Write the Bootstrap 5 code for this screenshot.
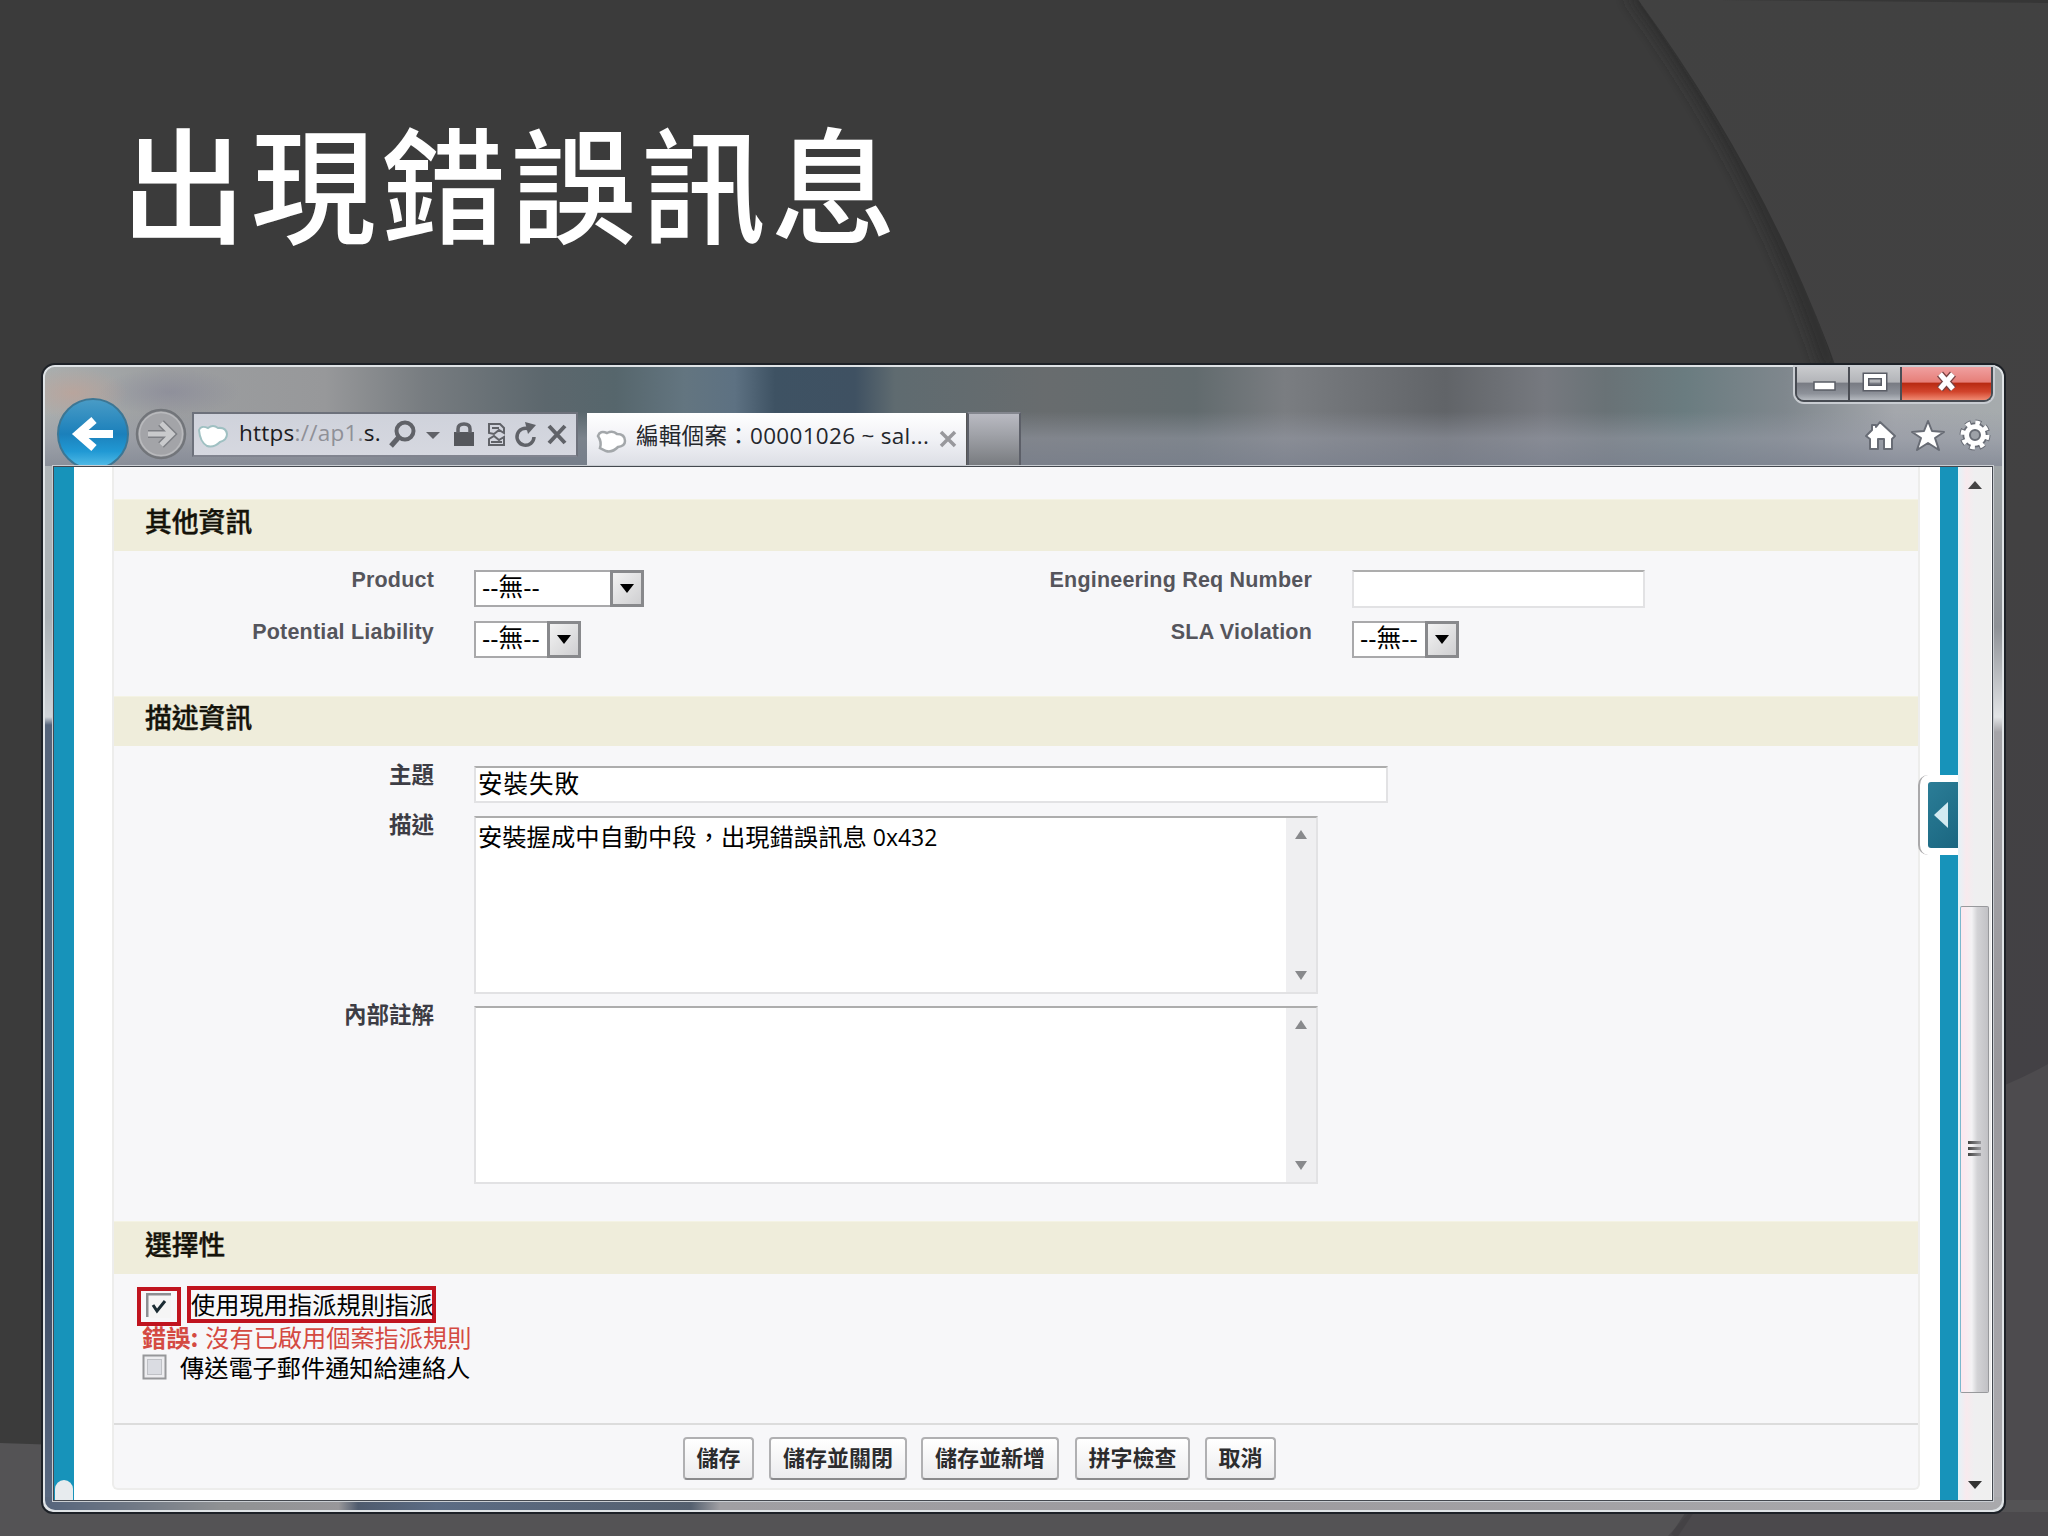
<!DOCTYPE html>
<html lang="zh-Hant">
<head>
<meta charset="utf-8">
<meta name="viewport" content="width=device-width, initial-scale=1">
<title>出現錯誤訊息</title>
<link rel="stylesheet" href="https://cdn.jsdelivr.net/npm/bootstrap@5.3.0/dist/css/bootstrap.min.css">
<script src="https://cdn.jsdelivr.net/npm/bootstrap@5.3.0/dist/js/bootstrap.bundle.min.js"></script>
<style>
  body{width:2048px;height:1536px;overflow:hidden;background:#3b3b3b;font-family:"Liberation Sans","Noto Sans CJK TC",sans-serif;color:#000;line-height:1}
  svg{display:block;flex:none}
  .backdrop{z-index:0}
  .slide{z-index:1;width:2048px;height:1536px}
  .slide-title{height:363px;padding:115px 0 0 121px;font:500 125px/130px "Noto Sans CJK TC",sans-serif;color:#fff;letter-spacing:5px;white-space:nowrap}
  /* browser window */
  .win{margin-left:41px;width:1965px;height:1151px;border-radius:14px 14px 12px 12px;border:2px solid #1d2127;padding:2px;background:#dfe3e6}
  .glass{border-radius:10px;width:100%;height:100%;padding:0 11px 11px 8px;
    background:
     linear-gradient(90deg,#56657c 0,#6d7684 4%,#8f9193 9%,#98979a 15%,#4f5b6e 16%,#5c6c84 20%,#55606f 33%,#a09fa3 34.5%,#9d9b9f 60%,#a9a9ac 100%) 0 100%/100% 13px no-repeat,
     linear-gradient(180deg,#b3b9bb 0,#a9b0b5 250px,#cfd3d8 350px,#55647b 358px,#56657b 700px,#3e4d66 900px,#5a6a82 100%) 0 0/9px 100% no-repeat,
     linear-gradient(180deg,#a9b0b0 0,#8e9196 260px,#e2e4e6 350px,#a5a4a8 365px,#98979b 700px,#adacb0 100%) 100% 0/11px 100% no-repeat,
     #8b9199}
  .chrome{height:99px;margin:0 -11px 0 -8px;border-radius:10px 10px 0 0;padding:0 9px 0 12px;
    background:
     linear-gradient(180deg,transparent 45%,rgba(150,154,166,.55) 72%,rgba(128,134,148,.75) 100%),
     radial-gradient(ellipse 55px 26px at 28px 26px,rgba(200,160,145,.55),transparent),
     radial-gradient(ellipse 70px 24px at 125px 25px,rgba(130,130,150,.5),transparent),
     linear-gradient(90deg,#a9aeae 0,#9c9ea0 120px,#97989a 280px,#777c80 380px,#5c676d 500px,#56666c 570px,#637580 640px,#5d7182 690px,#3e5263 730px,#3f5162 810px,#5f6b70 850px,#686c6e 1000px,#626b6e 1150px,#7a7d81 1240px,#616468 1400px,#76797f 1500px,#697276 1560px,#6a7c80 1640px,#7f878d 1740px,#a4a7ac 1850px,#a6abad 100%)}
  .controls{top:0;right:9px;height:35px;border:2px solid #474b52;border-top:0;border-radius:0 0 9px 9px;overflow:hidden;box-shadow:0 0 0 2px #c8ccd1}
  .controls div{background:linear-gradient(#c9cacd 0,#b3b5b9 45%,#797c84 50%,#8d9199 80%,#b5b9bf);border-right:2px solid #4b4e55}
  .controls .close-win{background:linear-gradient(#f0a0a0 0,#e67f79 45%,#b92b13 50%,#d2442c 75%,#f08a72);border:0}
  .addr{height:45px;width:386px;background:linear-gradient(#cfd2db,#d6d8e0);border:2px solid #6d717b;border-bottom-color:#81848f;font-family:"Open Sans","Noto Sans",sans-serif;font-size:22.5px;color:#1c1c22;margin-left:2px;margin-bottom:9px}
  .addr .url{padding-bottom:3px;letter-spacing:.25px}
  .addr .dim{color:#8f9097}
  .tabx{height:53px;width:380px;margin-left:9px;background:linear-gradient(#fff,#f0f1f5 50%,#dcdee5);font-family:"Open Sans","Noto Sans CJK TC",sans-serif;font-size:22.5px;letter-spacing:.3px;color:#25272c;padding-left:9px;border-right:1px solid #555}
  .tabx .cap{padding-bottom:6px}
  .newtab{height:54px;width:54px;background:linear-gradient(#b9bac2,#a0a2a8 40%,#777a7e);border:2px solid #5c5f68;border-bottom:0;border-top-color:#83868e}
  .view{border:1px solid #44484f;height:1035px;width:1940px;background:#fff;outline:1px solid #c9cdd2}
  .teal{background:#1793ba}
  .page{width:1866px;padding:0 21px 0 38px}
  .panel{width:1808px;height:1023px;background:#f7f7f9;border:2px solid #ededec;border-top:0;border-radius:0 0 6px 6px}
  .sec{background:#efeddb;font-size:26.8px;font-weight:500;color:#15130a;padding:0 0 8px 31px;display:flex;align-items:center;-webkit-text-stroke:.4px #15130a;border-top:1px solid #f4f3e4;font-family:"Noto Sans CJK TC",sans-serif}
  .lbl{width:320px;text-align:right;font-weight:700;font-size:21.5px;color:#55555c;letter-spacing:.2px;white-space:nowrap}
  .lbl.zh{font-size:22.5px;letter-spacing:0;color:#3d3d45;margin-top:-4px;font-family:"Noto Sans CJK TC",sans-serif}
  .fld{background:#fff;border:2px solid #e2e2e4;border-top-color:#adadad;font:400 24.5px/1 "Noto Sans CJK TC",sans-serif}
  .pick{background:#fff;border:2px solid #a9a9ab;height:37px;font-size:24.8px;white-space:nowrap;display:flex;justify-content:space-between;align-items:center;padding-left:6px}
  .pick b{width:34px;height:37px;flex:none;margin:-2px;border:3px solid #88898c;background:linear-gradient(135deg,#f3f3f3,#cfcfd1);display:flex;align-items:center;justify-content:center}
  .mem{width:844px;height:178px;display:flex}
  .mem .txt{flex:1;padding:6px 0 0 2px;font-size:24.3px;white-space:nowrap}
  .mem .txt span{font:400 23px/1 "Open Sans",sans-serif}
  .mem .bar{width:30px;background:#efeff1;display:flex;flex-direction:column;justify-content:space-between;align-items:center;padding:12px 0}
  .zh-body{font:400 24.2px/1 "Noto Sans CJK TC",sans-serif;white-space:nowrap}
  .hot{border:4px solid #c0141f}
  .btnx{height:43px;border:2px solid #b0b0b2;border-bottom-color:#8a8a8c;border-radius:4px;background:linear-gradient(#fff,#ececee);font:700 22px/1 "Noto Sans CJK TC",sans-serif;color:#2c2c2e;display:flex;align-items:center;justify-content:center;padding:0 0 5px}
  .vscroll{width:33px;background:linear-gradient(90deg,#e3f3f8 0,#f8eaee 25%,#efeff0 50%,#efefef)}
  .thumb{width:29px;height:487px;border:1px solid #98999c;border-left-color:#7bb9ce;border-radius:2px;background:linear-gradient(90deg,#fbe9f0 10%,#f3f2f4 40%,#d3d3d6 60%,#c1c1c5)}
  .grip i{display:block;width:13px;height:3px;margin-bottom:3px;background:linear-gradient(90deg,#444,#9a9a9e)}
  .drawer{left:1864px;top:308px;width:40px;height:80px;background:#fff;border-left:2px solid #aaa9ab;border-radius:10px 0 0 10px;padding:7px 0 0 8px}
  .drawer div{height:66px;width:30px;background:linear-gradient(135deg,#2b7d97,#1a6680);border-radius:3px 0 0 3px;padding:20px 0 0 6px}
  .bubble{left:1px;bottom:0;width:18px;height:20px;background:#e7ebee;border-radius:9px 9px 0 0}
</style>
</head>
<body>
<svg class="backdrop position-absolute top-0 start-0" width="2048" height="1536" viewBox="0 0 2048 1536">
  <defs>
    <linearGradient id="g2" x1="0" y1="0" x2="0" y2="1"><stop offset="0" stop-color="#414141"/><stop offset=".35" stop-color="#424142"/><stop offset=".7" stop-color="#434145"/></linearGradient>
    <filter id="soft" x="-30%" y="-10%" width="160%" height="120%"><feGaussianBlur stdDeviation="8"/></filter>
  </defs>
  <rect width="2048" height="1536" fill="#3b3b3b"/>
  <path d="M1634 -10Q1768 175 1832 372" fill="none" stroke="#2a2a2a" stroke-width="14" filter="url(#soft)"/>
  <path d="M1631 -10Q1768 175 1840 378L1900 700L1900 1536H2048V-10Z" fill="url(#g2)"/>
  <path d="M1720 0L2048 3V0Z" fill="#363636"/>
  <path d="M2048 1064Q2020 1080 1980 1095V1536H2048Z" fill="#4d4b4e"/>
  <path d="M0 1443L60 1445V1500H2048V1536H0Z" fill="#545355"/>
  <path d="M1690 1512L1668 1536H2048V1512Z" fill="#4b494c"/>
  <path d="M1690 1512L1674 1536" stroke="#403f42" stroke-width="7" opacity=".6"/>
</svg>
<main class="slide position-relative d-flex flex-column">
  <h1 class="slide-title m-0">出現錯誤訊息</h1>
  <section class="win">
    <div class="glass">
      <header class="chrome d-flex align-items-end position-relative">
        <svg width="133" height="70" viewBox="0 0 133 70">
          <defs><linearGradient id="bk" x1="0" y1="0" x2="0" y2="1"><stop offset="0" stop-color="#4a9cc6"/><stop offset=".5" stop-color="#1b80bb"/><stop offset=".75" stop-color="#2199d4"/><stop offset="1" stop-color="#5cc2ea"/></linearGradient></defs>
          <circle cx="36" cy="38" r="35" fill="url(#bk)" stroke="#3c7694" stroke-width="2"/>
          <path d="M37 24L21 38L37 52M21 38H56" fill="none" stroke="#fff" stroke-width="8"/>
          <circle cx="104" cy="38" r="24" fill="#a3a4a8" stroke="#72757a" stroke-width="2.500"/>
          <circle cx="104" cy="38" r="21.500" fill="none" stroke="#b9babd" stroke-width="1.500"/>
          <path d="M91 38H113M104 27L115 38L104 49" fill="none" stroke="#7d7f84" stroke-width="8"/>
          <path d="M91 38H113M104 27L115 38L104 49" fill="none" stroke="#c9cacc" stroke-width="5"/>
        </svg>
        <div class="addr d-flex align-items-center">
          <svg width="45" height="40" viewBox="0 0 45 40"><path d="M5 15Q7 10 14 13Q19 9 24 13Q32 12 33 19Q33 25 26 27Q20 33 13 31Q6 27 5 15Z" fill="#fff" stroke="#9fc0c2" stroke-width="2"/></svg>
          <span class="url">https<span class="dim">://ap1.</span>s.</span>
          <svg width="190" height="40" viewBox="386 416 190 40" class="ms-auto" fill="none" stroke="#606268">
            <circle cx="405" cy="432" r="8.500" stroke-width="4"/><path d="M399 438L391 447" stroke-width="5"/>
            <path d="M426 433H440L433 440Z" fill="#606268" stroke="none"/>
            <rect x="454" y="433" width="20" height="14" fill="#55575c" stroke="none"/><path d="M458 434V430Q458 425 464 425Q470 425 470 430V434" stroke-width="3.500"/>
            <path d="M489 434V425H500L504 429V434L499 431L494 435ZM489 446V440L494 437L499 441L504 438V446Z" stroke-width="2"/><path d="M492 429H499M491 443H502" stroke-width="2"/>
            <path d="M534 438A8.500 8.500 0 1 1 529 430" stroke-width="3.500"/><path d="M525 423L536 426L528 435Z" fill="#606268" stroke="none"/>
            <path d="M549 427L565 444M565 427L549 444" stroke-width="4"/>
          </svg>
        </div>
        <div class="tabx d-flex align-items-center">
          <svg width="40" height="40" viewBox="0 0 40 40"><path d="M2 16Q4 10 11 13Q17 10 21 14Q29 14 29 21Q29 26 22 27Q16 33 10 31L4 28Q6 22 2 16Z" fill="#fff" stroke="#a3a7aa" stroke-width="2.500"/></svg>
          <span class="cap text-nowrap">編輯個案：00001026 ~ sal...</span>
          <svg width="20" height="20" viewBox="0 0 20 20" class="ms-auto" style="margin-right:8px"><path d="M3 2L17 16M17 2L3 16" stroke="#98989c" stroke-width="3.500"/></svg>
        </div>
        <div class="newtab"></div>
        <svg class="ms-auto" width="130" height="58" viewBox="1864 409 130 58" fill="#fff" stroke="#686c75" stroke-width="2" stroke-linejoin="round">
          <path d="M1867 437L1873 431V426H1877V428L1881 423L1896 437L1893 440V450H1885V440H1879V450H1871V440Z"/>
          <path d="M1929 422L1933 432L1945 433L1936 439L1940 451L1929 444L1918 451L1922 439L1913 433L1925 432Z"/>
          <g><circle cx="1976" cy="436" r="12.500" fill="none" stroke-width="6" stroke-dasharray="5.500 4.320"/><circle cx="1976" cy="436" r="8" fill="none" stroke="#686c75" stroke-width="9"/><circle cx="1976" cy="436" r="8" fill="none" stroke="#fff" stroke-width="5.500"/><circle cx="1976" cy="436" r="12" fill="none" stroke="#fff" stroke-width="5" stroke-dasharray="4.500 4.920"/><circle cx="1976" cy="436" r="5" fill="#9da1a8" stroke-width="2"/></g>
        </svg>
        <div class="controls position-absolute d-flex">
          <div style="width:53px"><svg width="51" height="35"><rect x="17" y="15" width="21" height="8" fill="#fff" stroke="#5a5d66" stroke-width="1.500"/></svg></div>
          <div style="width:52px"><svg width="50" height="35"><rect x="16" y="9" width="18" height="12" fill="none" stroke="#5a5d66" stroke-width="7"/><rect x="16" y="9" width="18" height="12" fill="none" stroke="#fff" stroke-width="4"/></svg></div>
          <div class="close-win" style="width:89px"><svg width="89" height="35" fill="none"><path d="M38 7L51 22M51 7L38 22" stroke="#7a4444" stroke-width="8"/><path d="M38 7L51 22M51 7L38 22" stroke="#fff" stroke-width="5"/></svg></div>
        </div>
      </header>
      <div class="view d-flex position-relative overflow-hidden">
        <div class="teal" style="width:20px"></div>
        <div class="page">
          <div class="panel">
            <div style="height:32px"></div>
            <div class="sec" style="height:52px">其他資訊</div>
            <div class="d-flex" style="height:145px">
              <div class="d-flex" style="width:878px">
                <div class="lbl" style="padding-top:19px"><div>Product</div><div style="margin-top:30px">Potential Liability</div></div>
                <div style="padding:19px 0 0 40px">
                  <div class="pick" style="width:170px"><span>--無--</span><b><svg width="14" height="9"><path d="M0 0H14L7 9Z"/></svg></b></div>
                  <div class="pick" style="width:107px;margin-top:14px"><span>--無--</span><b><svg width="14" height="9"><path d="M0 0H14L7 9Z"/></svg></b></div>
                </div>
              </div>
              <div class="d-flex">
                <div class="lbl" style="padding-top:19px"><div>Engineering Req Number</div><div style="margin-top:30px">SLA Violation</div></div>
                <div style="padding:19px 0 0 40px">
                  <div class="fld" style="width:293px;height:38px"></div>
                  <div class="pick" style="width:107px;margin-top:13px"><span>--無--</span><b><svg width="14" height="9"><path d="M0 0H14L7 9Z"/></svg></b></div>
                </div>
              </div>
            </div>
            <div class="sec" style="height:50px">描述資訊</div>
            <div class="d-flex flex-column" style="height:475px;padding-top:20px">
              <div class="d-flex" style="height:50px"><div class="lbl zh">主題</div><div class="fld" style="margin-left:40px;width:914px;height:37px;padding:3px 0 0 2px;letter-spacing:1px">安裝失敗</div></div>
              <div class="d-flex" style="height:190px"><div class="lbl zh">描述</div><div class="fld mem" style="margin-left:40px"><div class="txt">安裝握成中自動中段，出現錯誤訊息<span> 0x432</span></div><div class="bar"><svg width="12" height="9"><path d="M6 0L12 9H0Z" fill="#88898c"/></svg><svg width="12" height="9"><path d="M0 0H12L6 9Z" fill="#88898c"/></svg></div></div></div>
              <div class="d-flex"><div class="lbl zh">內部註解</div><div class="fld mem" style="margin-left:40px"><div class="txt"></div><div class="bar"><svg width="12" height="9"><path d="M6 0L12 9H0Z" fill="#88898c"/></svg><svg width="12" height="9"><path d="M0 0H12L6 9Z" fill="#88898c"/></svg></div></div></div>
            </div>
            <div class="sec" style="height:53px">選擇性</div>
            <div class="zh-body" style="height:149px;padding:12px 0 0 23px">
              <div class="d-flex" style="height:39px">
                <div class="hot" style="width:44px;height:39px;padding:2px 0 0 5px;margin-top:1px"><svg width="26" height="26"><rect width="25" height="25" fill="#f5f5f5"/><path d="M1 24V1H25" fill="none" stroke="#8d8e92" stroke-width="3"/><path d="M7 12L11 18L19 8" fill="none" stroke="#1b2c33" stroke-width="3"/></svg></div>
                <div class="hot" style="width:249px;height:37px;margin-left:6px;padding-top:2px;letter-spacing:.05px"><span>使用現用指派規則指派</span></div>
              </div>
              <div style="color:#d44a42;margin-left:5px;height:29px"><b>錯誤:</b><span style="margin-left:7px">沒有已啟用個案指派規則</span></div>
              <div class="d-flex align-items-center" style="margin-left:5px"><svg width="26" height="26"><rect x="1.500" y="1.500" width="22" height="23" fill="#ededf0" stroke="#96979a" stroke-width="2"/><rect x="5.500" y="5.500" width="14" height="15" fill="#dadce2" stroke="#bfc1c6"/></svg><span style="margin-left:12px">傳送電子郵件通知給連絡人</span></div>
            </div>
            <div class="d-flex" style="border-top:2px solid #dcdcdc;padding:12px 0 0 569px">
              <div class="btnx" style="width:71px">儲存</div>
              <div class="btnx" style="width:138px;margin-left:15px">儲存並關閉</div>
              <div class="btnx" style="width:138px;margin-left:14px">儲存並新增</div>
              <div class="btnx" style="width:115px;margin-left:16px">拼字檢查</div>
              <div class="btnx" style="width:71px;margin-left:15px">取消</div>
            </div>
          </div>
        </div>
        <div class="teal" style="width:18px"></div>
        <div class="vscroll d-flex flex-column align-items-center">
          <svg width="14" height="8" style="margin-top:14px"><path d="M7 0L14 8H0Z" fill="#444"/></svg>
          <div class="thumb d-flex align-items-center justify-content-center grip" style="margin-top:417px"><div><i></i><i></i><i></i></div></div>
          <svg width="14" height="8" class="mt-auto" style="margin-bottom:11px"><path d="M0 0H14L7 8Z" fill="#333"/></svg>
        </div>
        <div class="drawer position-absolute"><div><svg width="14" height="26"><path d="M14 0V26L0 13Z" fill="#d3eaf1"/></svg></div></div>
        <div class="bubble position-absolute"></div>
      </div>
    </div>
  </section>
</main>
</body>
</html>
